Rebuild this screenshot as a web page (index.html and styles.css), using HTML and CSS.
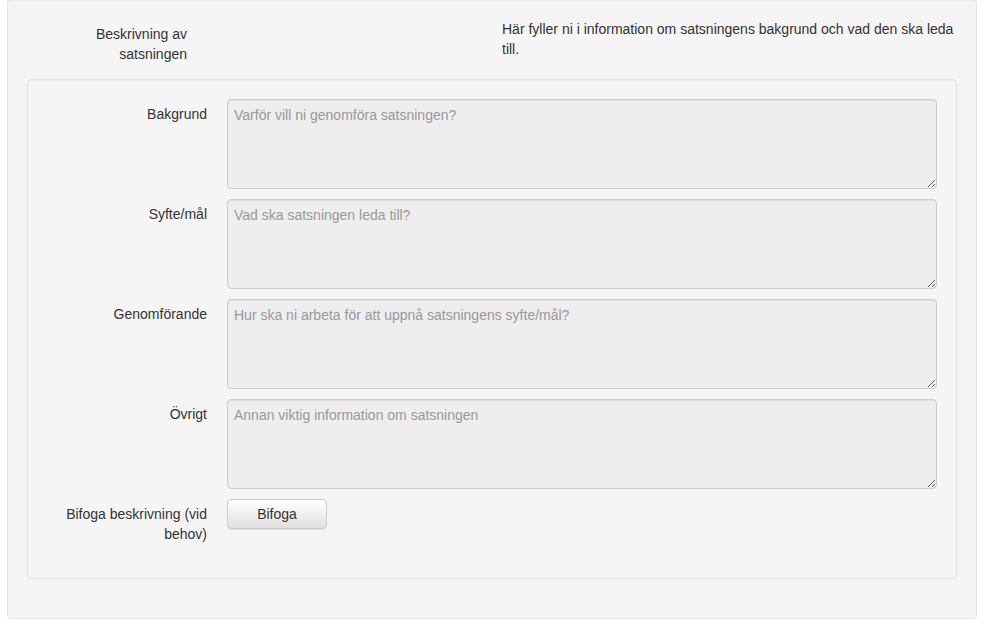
FILE: index.html
```html
<!DOCTYPE html>
<html lang="sv">
<head>
<meta charset="utf-8">
<title>Beskrivning av satsningen</title>
<link rel="stylesheet" href="styles.css">
</head>
<body>
<div class="well">
  <div class="head-row">
    <div class="head-label">Beskrivning av<br>satsningen</div>
    <div class="head-text">Här fyller ni i information om satsningens bakgrund och vad den ska leda till.</div>
  </div>
  <div class="inner">
    <div class="form-grid">
      <label class="lbl" for="bg">Bakgrund</label>
      <textarea id="bg" class="ta" readonly placeholder="Varför vill ni genomföra satsningen?"></textarea>
      <label class="lbl" for="sm">Syfte/mål</label>
      <textarea id="sm" class="ta" readonly placeholder="Vad ska satsningen leda till?"></textarea>
      <label class="lbl" for="gf">Genomförande</label>
      <textarea id="gf" class="ta" readonly placeholder="Hur ska ni arbeta för att uppnå satsningens syfte/mål?"></textarea>
      <label class="lbl" for="ov">Övrigt</label>
      <textarea id="ov" class="ta" readonly placeholder="Annan viktig information om satsningen"></textarea>
      <div class="lbl">Bifoga beskrivning (vid behov)</div>
      <div><button class="btn" type="button">Bifoga</button></div>
    </div>
  </div>
</div>
</body>
</html>
```
FILE: styles.css
```css
html, body {
  margin: 0;
  padding: 0;
  background: #ffffff;
}
body {
  font-family: "Liberation Sans", Arial, sans-serif;
  font-size: 14px;
  line-height: 20px;
  color: #333333;
}
.well {
  box-sizing: border-box;
  margin: -1px 0 0 7px;
  width: 970px;
  height: 620px;
  padding: 19px 19px 39px 19px;
  background: #f5f5f5;
  border: 1px solid #e3e3e3;
  border-radius: 4px;
  box-shadow: inset 0 1px 1px rgba(0, 0, 0, 0.05);
}
.head-row {
  display: grid;
  grid-template-columns: 179px 1fr;
  column-gap: 315px;
  margin-left: -19px;
  margin-right: -8px;
  height: 60px;
}
.head-label {
  text-align: right;
  padding-top: 5px;
}
.head-text {
  padding-top: 0;
}
.inner {
  box-sizing: border-box;
  height: 500px;
  padding: 19px 19px 0 0;
  background: #f5f5f5;
  border: 1px solid #e3e3e3;
  border-radius: 4px;
  box-shadow: inset 0 1px 1px rgba(0, 0, 0, 0.05);
}
.form-grid {
  display: grid;
  grid-template-columns: 179px 1fr;
  column-gap: 20px;
  row-gap: 10px;
}
.lbl {
  text-align: right;
  padding-top: 5px;
}
.ta {
  box-sizing: border-box;
  display: block;
  width: 100%;
  height: 90px;
  margin: 0;
  padding: 5px 6px;
  font-family: "Liberation Sans", Arial, sans-serif;
  font-size: 14px;
  line-height: 20px;
  color: #555555;
  background: #eeeeee;
  border: 1px solid #cccccc;
  border-radius: 4px;
  box-shadow: inset 0 1px 1px rgba(0, 0, 0, 0.075);
  resize: vertical;
}
.ta::placeholder {
  color: #999999;
  opacity: 1;
}
.btn {
  box-sizing: border-box;
  width: 100px;
  height: 30px;
  margin: 0;
  padding: 0;
  font-family: "Liberation Sans", Arial, sans-serif;
  font-size: 14px;
  color: #333333;
  background: linear-gradient(to bottom, #ffffff 0%, #e0e0e0 100%);
  border: 1px solid #cccccc;
  border-radius: 4px;
  box-shadow: inset 0 1px 0 rgba(255, 255, 255, 0.15), 0 1px 1px rgba(0, 0, 0, 0.075);
}
```
